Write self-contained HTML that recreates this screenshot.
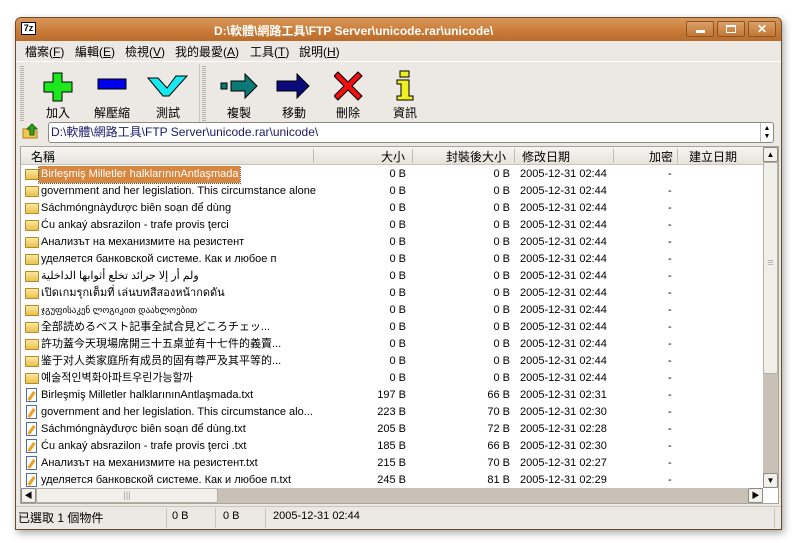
<!DOCTYPE html>
<html><head><meta charset="utf-8"><style>
*{box-sizing:border-box;margin:0;padding:0}
body{width:796px;height:543px;background:#fff;position:relative;overflow:hidden;font-family:"Liberation Sans","Noto Sans CJK TC",sans-serif;font-size:11px;color:#000}
.abs{position:absolute}
#win{left:15px;top:17px;width:767px;height:513px;background:#ece9e4;border:1px solid #6b4a2a;border-radius:6px 6px 0 0;box-shadow:2px 3px 8px rgba(0,0,0,.35);overflow:hidden}
#title{left:0;top:0;width:765px;height:23px;background:linear-gradient(#d9985a,#c97a36 60%,#b96c2c);color:#fff;font-weight:bold;font-size:12px}
.tb{top:3px;width:28px;height:16px;border:1px solid #8a5526;border-radius:2px;background:linear-gradient(#dba06a,#c27633)}
.mi{position:absolute;top:25px;font-size:12px}
.tool{position:absolute;top:86px;width:50px;text-align:center;font-size:12px}
.grip{position:absolute;width:4px;height:56px;background:repeating-linear-gradient(#b8b3aa 0 1px,transparent 1px 2px)}
#list{left:4px;top:128px;width:759px;height:358px;background:#fff;border:1px solid #a8a49b}
.hdr{position:absolute;top:0;height:18px;background:linear-gradient(#f6f5f2,#e6e3dc);border-bottom:1px solid #c9c5bc;font-size:12px;line-height:18px}
.hs{position:absolute;top:2px;width:1px;height:14px;background:#c0bcb2}
.row{position:absolute;left:0;height:17px;line-height:17px;white-space:nowrap;width:740px}
.row span{position:absolute}
.n{left:20px}.s{left:293px;width:92px;text-align:right}.p{left:393px;width:96px;text-align:right}.d{left:499px}.e{left:647px}
.ico{position:absolute;left:4px;top:3px;width:14px;height:11px;background:linear-gradient(#fbe9a0,#e9c14e);border:1px solid #b58a25;border-radius:1px}
.txt{position:absolute;left:5px;top:1px;width:11px;height:14px;background:#fff;border:1px solid #4d6fa8}
.txt:after{content:"";position:absolute;left:3px;top:2px;width:3px;height:10px;background:#f0a020;transform:rotate(35deg)}
.btn{position:absolute;width:15px;height:15px;border:1px solid #8d8a83;border-radius:2px;background:#f3f1ec;font-size:8px;text-align:center;line-height:13px}
</style></head><body>
<div id="win" class="abs">
 <div id="title" class="abs">
  <div class="abs" style="left:5px;top:4px;width:15px;height:13px;background:#fff;border:1px solid #000;font-size:9px;line-height:11px;color:#000;text-align:center;font-weight:bold">7z</div>
  <div class="abs" style="left:198px;top:4px;">D:\軟體\網路工具\FTP Server\unicode.rar\unicode\</div>
  <div class="abs tb" style="left:670px"><div class="abs" style="left:9px;top:8px;width:9px;height:3px;background:#fff"></div></div>
  <div class="abs tb" style="left:701px"><div class="abs" style="left:8px;top:3px;width:10px;height:8px;border:2px solid #fff;border-width:2px 1px 1px"></div></div>
  <div class="abs tb" style="left:732px;color:#fff;text-align:center;font-size:12px;line-height:14px">✕</div>
 </div>
 <div class="mi" style="left:9px">檔案(<u>F</u>)</div>
 <div class="mi" style="left:59px">編輯(<u>E</u>)</div>
 <div class="mi" style="left:109px">檢視(<u>V</u>)</div>
 <div class="mi" style="left:159px">我的最愛(<u>A</u>)</div>
 <div class="mi" style="left:234px">工具(<u>T</u>)</div>
 <div class="mi" style="left:283px">說明(<u>H</u>)</div>
 <div class="abs" style="left:0;top:43px;width:765px;height:1px;background:#fff"></div>
 <div class="grip" style="left:4px;top:48px"></div>
 <div class="grip" style="left:186px;top:48px"></div>
 <div class="abs" style="left:183px;top:46px;width:1px;height:58px;background:#c9c5bc"></div>
 <svg class="abs" style="left:27px;top:54px" width="32" height="30"><path d="M10 1h9v9h10v10h-10v9h-9v-9h-9v-10h9z" fill="#1de81d" stroke="#000"/></svg>
 <svg class="abs" style="left:81px;top:60px" width="32" height="14"><rect x="1" y="1" width="28" height="10" fill="#0000e8" stroke="#000"/></svg>
 <svg class="abs" style="left:131px;top:55px" width="42" height="26"><path d="M1 5h10l9 10l9-12h11l-18 20h-6z" fill="#18e8f0" stroke="#000"/></svg>
 <svg class="abs" style="left:204px;top:55px" width="40" height="26"><rect x="1" y="10" width="6" height="6" fill="#0b7a77" stroke="#000"/><path d="M11 8h14v-7l12 12l-12 12v-7h-14z" fill="#0b7a77" stroke="#000"/></svg>
 <svg class="abs" style="left:260px;top:55px" width="40" height="26"><path d="M1 8h20v-7l12 12l-12 12v-7h-20z" fill="#0a0a7a" stroke="#000"/></svg>
 <svg class="abs" style="left:318px;top:53px" width="30" height="30"><path d="M4 1l10 10l10-10l4 4l-10 10l10 10l-4 4l-10-10l-10 10l-4-4l10-10l-10-10z" fill="#f01010" stroke="#000"/></svg>
 <svg class="abs" style="left:378px;top:52px" width="22" height="32"><rect x="6" y="1" width="9" height="6" fill="#f0f020" stroke="#000"/><path d="M3 10h12v16h4v4h-16v-4h4v-12h-4z" fill="#f0f020" stroke="#000"/></svg>
 <div class="tool" style="left:17px">加入</div>
 <div class="tool" style="left:71px">解壓縮</div>
 <div class="tool" style="left:127px">測試</div>
 <div class="tool" style="left:198px">複製</div>
 <div class="tool" style="left:253px">移動</div>
 <div class="tool" style="left:307px">刪除</div>
 <div class="tool" style="left:364px">資訊</div>
 <svg class="abs" style="left:6px;top:105px" width="16" height="16"><path d="M1 6h5l1 2h8v7h-14z" fill="#f2c84a" stroke="#b08020"/><path d="M8 12v-6h-3l5-5l5 5h-3v6z" fill="#3aa020" stroke="#1a6010"/></svg>
 <div class="abs" style="left:32px;top:104px;width:726px;height:21px;background:#fff;border:1px solid #8d8a83;border-radius:3px;font-size:12px;line-height:19px;padding-left:2px;color:#1a1a6a">D:\軟體\網路工具\FTP Server\unicode.rar\unicode\</div>
 <div class="abs" style="left:744px;top:105px;width:13px;height:19px;border-left:1px solid #c0bcb2;font-size:7px;line-height:8px;text-align:center;padding-top:2px">▲<br>▼</div>
 <div id="list" class="abs">
  <div class="hdr" style="left:0;width:742px"></div>
  <div class="abs" style="left:10px;top:1px;font-size:12px">名稱</div>
  <div class="abs" style="left:360px;top:1px;font-size:12px">大小</div>
  <div class="abs" style="left:425px;top:1px;font-size:12px">封裝後大小</div>
  <div class="abs" style="left:501px;top:1px;font-size:12px">修改日期</div>
  <div class="abs" style="left:628px;top:1px;font-size:12px">加密</div>
  <div class="abs" style="left:668px;top:1px;font-size:12px">建立日期</div>
  <div class="hs" style="left:292px"></div><div class="hs" style="left:391px"></div><div class="hs" style="left:493px"></div><div class="hs" style="left:592px"></div><div class="hs" style="left:656px"></div>
  <div class="abs" style="left:742px;top:0;width:15px;height:341px;background:#c9c1b6">
   <div class="btn" style="left:0;top:0">▲</div>
   <div class="abs" style="left:0;top:15px;width:15px;height:212px;background:#f1efea;border:1px solid #b5b0a6;border-radius:2px;text-align:center;color:#aaa;line-height:200px">≡</div>
   <div class="btn" style="left:0;top:326px">▼</div>
  </div>
  <div class="abs" style="left:0;top:341px;width:742px;height:15px;background:#c9c1b6">
   <div class="btn" style="left:0;top:0">◀</div>
   <div class="abs" style="left:15px;top:0;width:182px;height:15px;background:#f1efea;border:1px solid #b5b0a6;border-radius:2px;text-align:center;color:#999;line-height:13px;font-size:9px">|||</div>
   <div class="btn" style="left:727px;top:0">▶</div>
  </div>
  <div id="rows" class="abs" style="left:0;top:19px;width:742px;height:322px;overflow:hidden">
<div class="row" style="top:0"><i class="ico"></i><span class="n" style="background:#d7873f;color:#fff;padding:0 2px;left:18px;outline:1px dotted #555">Birleşmiş Milletler halklarınınAntlaşmada</span><span class="s">0 B</span><span class="p">0 B</span><span class="d">2005-12-31 02:44</span><span class="e">-</span></div>
<div class="row" style="top:17px"><i class="ico"></i><span class="n">government and her legislation. This circumstance alone</span><span class="s">0 B</span><span class="p">0 B</span><span class="d">2005-12-31 02:44</span><span class="e">-</span></div>
<div class="row" style="top:34px"><i class="ico"></i><span class="n">Sáchmóngnàyđược biên soạn để dùng</span><span class="s">0 B</span><span class="p">0 B</span><span class="d">2005-12-31 02:44</span><span class="e">-</span></div>
<div class="row" style="top:51px"><i class="ico"></i><span class="n">Ću ankaý absrazilon - trafe provis ţerci</span><span class="s">0 B</span><span class="p">0 B</span><span class="d">2005-12-31 02:44</span><span class="e">-</span></div>
<div class="row" style="top:68px"><i class="ico"></i><span class="n">Анализът на механизмите на резистент</span><span class="s">0 B</span><span class="p">0 B</span><span class="d">2005-12-31 02:44</span><span class="e">-</span></div>
<div class="row" style="top:85px"><i class="ico"></i><span class="n">уделяется банковской системе.  Как и любое п</span><span class="s">0 B</span><span class="p">0 B</span><span class="d">2005-12-31 02:44</span><span class="e">-</span></div>
<div class="row" style="top:102px"><i class="ico"></i><span class="n">ولم أر إلا جرائد تخلع أثوابها الداخلية</span><span class="s">0 B</span><span class="p">0 B</span><span class="d">2005-12-31 02:44</span><span class="e">-</span></div>
<div class="row" style="top:119px"><i class="ico"></i><span class="n">เปิดเกมรุกเต็มที่ เล่นบทสีสองหน้ากดดัน</span><span class="s">0 B</span><span class="p">0 B</span><span class="d">2005-12-31 02:44</span><span class="e">-</span></div>
<div class="row" style="top:136px"><i class="ico"></i><span class="n" style="font-size:9px">ჯგუფისაკენ ლოგიკით დაახლოებით</span><span class="s">0 B</span><span class="p">0 B</span><span class="d">2005-12-31 02:44</span><span class="e">-</span></div>
<div class="row" style="top:153px"><i class="ico"></i><span class="n">全部読めるベスト記事全試合見どころチェッ...</span><span class="s">0 B</span><span class="p">0 B</span><span class="d">2005-12-31 02:44</span><span class="e">-</span></div>
<div class="row" style="top:170px"><i class="ico"></i><span class="n">許功蓋今天現場席開三十五桌並有十七件的義賣...</span><span class="s">0 B</span><span class="p">0 B</span><span class="d">2005-12-31 02:44</span><span class="e">-</span></div>
<div class="row" style="top:187px"><i class="ico"></i><span class="n">鉴于对人类家庭所有成员的固有尊严及其平等的...</span><span class="s">0 B</span><span class="p">0 B</span><span class="d">2005-12-31 02:44</span><span class="e">-</span></div>
<div class="row" style="top:204px"><i class="ico"></i><span class="n">예술적인벽화아파트우린가능할까</span><span class="s">0 B</span><span class="p">0 B</span><span class="d">2005-12-31 02:44</span><span class="e">-</span></div>
<div class="row" style="top:221px"><i class="txt"></i><span class="n">Birleşmiş Milletler halklarınınAntlaşmada.txt</span><span class="s">197 B</span><span class="p">66 B</span><span class="d">2005-12-31 02:31</span><span class="e">-</span></div>
<div class="row" style="top:238px"><i class="txt"></i><span class="n">government and her legislation. This circumstance alo...</span><span class="s">223 B</span><span class="p">70 B</span><span class="d">2005-12-31 02:30</span><span class="e">-</span></div>
<div class="row" style="top:255px"><i class="txt"></i><span class="n">Sáchmóngnàyđược biên soạn để dùng.txt</span><span class="s">205 B</span><span class="p">72 B</span><span class="d">2005-12-31 02:28</span><span class="e">-</span></div>
<div class="row" style="top:272px"><i class="txt"></i><span class="n">Ću ankaý absrazilon - trafe provis ţerci .txt</span><span class="s">185 B</span><span class="p">66 B</span><span class="d">2005-12-31 02:30</span><span class="e">-</span></div>
<div class="row" style="top:289px"><i class="txt"></i><span class="n">Анализът на механизмите на резистент.txt</span><span class="s">215 B</span><span class="p">70 B</span><span class="d">2005-12-31 02:27</span><span class="e">-</span></div>
<div class="row" style="top:306px"><i class="txt"></i><span class="n">уделяется банковской системе.  Как и любое п.txt</span><span class="s">245 B</span><span class="p">81 B</span><span class="d">2005-12-31 02:29</span><span class="e">-</span></div>
  </div>
 </div>
 <div class="abs" style="left:0;top:488px;width:765px;height:1px;background:#c9c5bc"></div>
 <div class="abs" style="left:2px;top:491px;font-size:12px">已選取 1 個物件</div>
 <div class="abs" style="left:150px;top:490px;width:1px;height:20px;background:#c9c5bc"></div>
 <div class="abs" style="left:156px;top:492px">0 B</div>
 <div class="abs" style="left:199px;top:490px;width:1px;height:20px;background:#c9c5bc"></div>
 <div class="abs" style="left:207px;top:492px">0 B</div>
 <div class="abs" style="left:249px;top:490px;width:1px;height:20px;background:#c9c5bc"></div>
 <div class="abs" style="left:257px;top:492px">2005-12-31 02:44</div>
 <div class="abs" style="left:758px;top:490px;width:1px;height:20px;background:#c9c5bc"></div>
</div>
</body></html>
